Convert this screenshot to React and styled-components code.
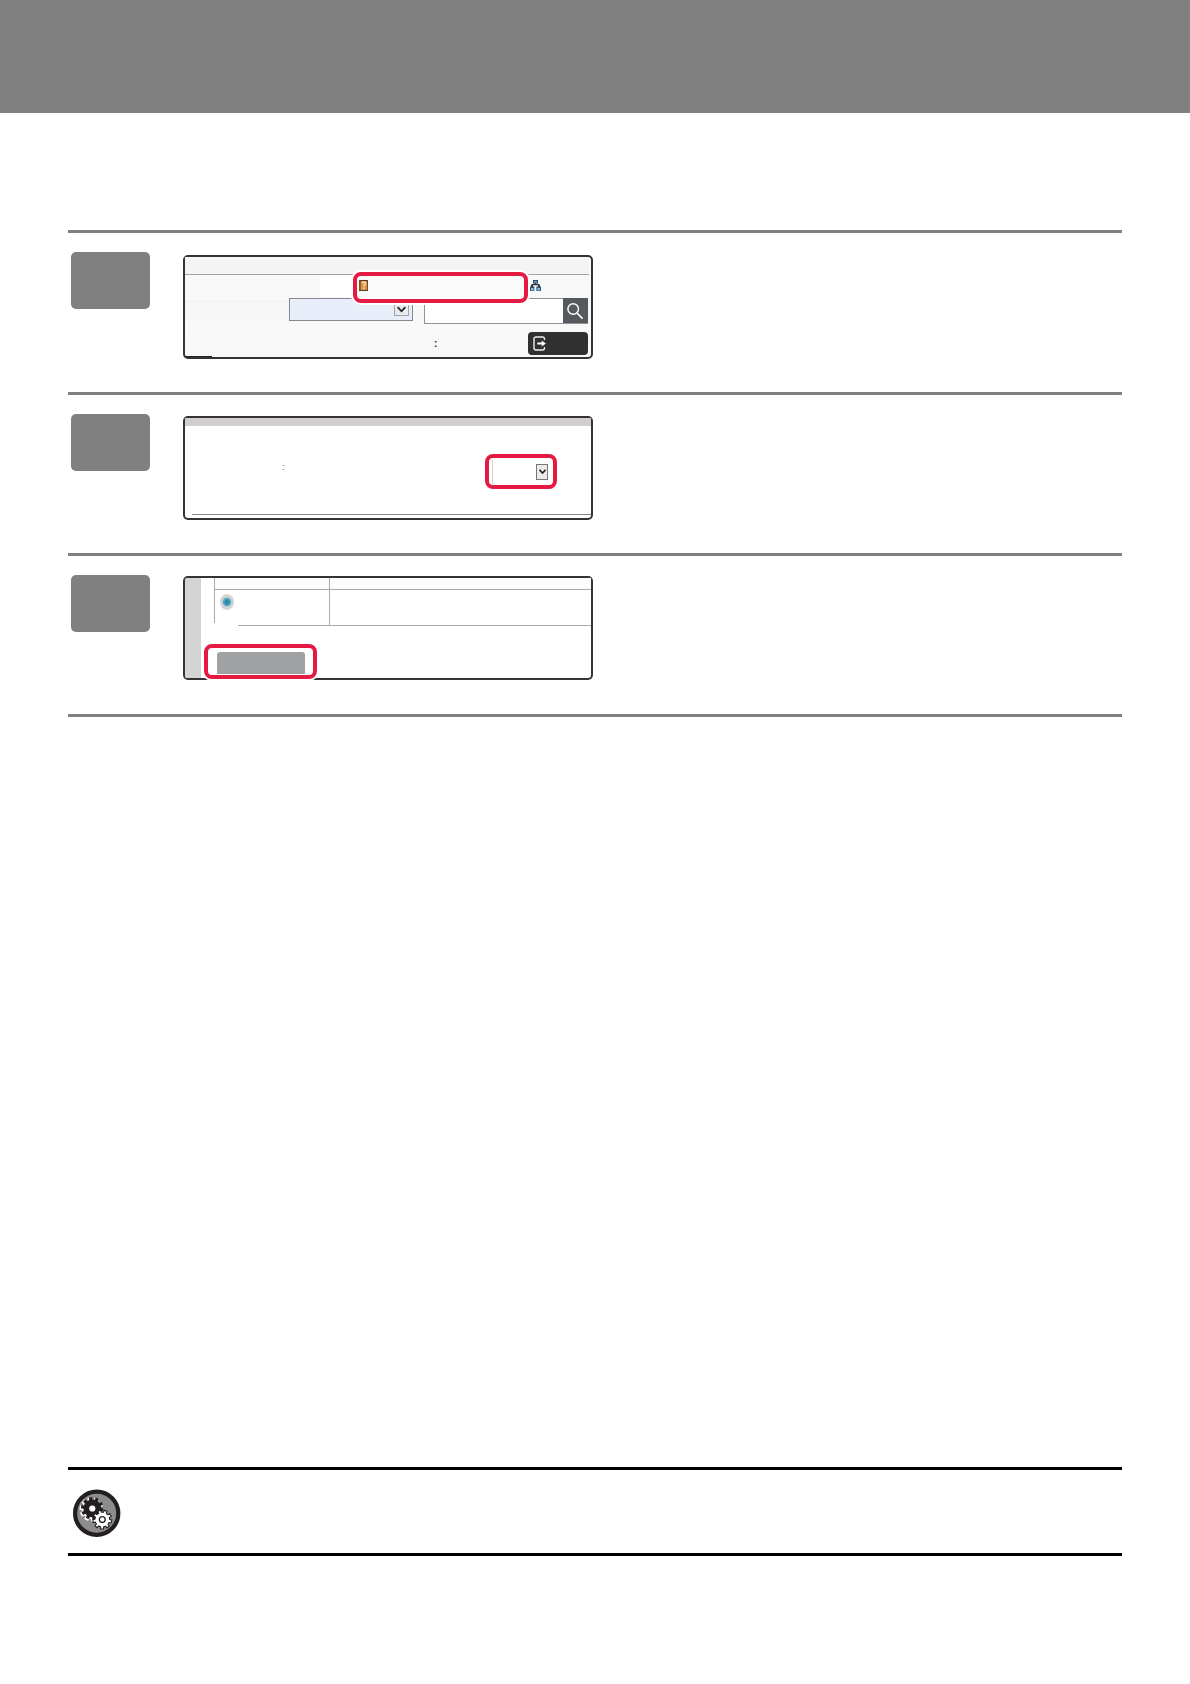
import React from "react";
import styled, { createGlobalStyle } from "styled-components";

const GlobalStyle = createGlobalStyle`
  * { box-sizing: border-box; }
  body { margin: 0; background: #fff; font-family: "Liberation Sans", Arial, sans-serif; }
  svg { display: block; flex: none; }
`;

const Page = styled.main`
  display: flex;
  flex-direction: column;
  width: 1190px;
  height: 1684px;
  overflow: hidden;
  background: #fff;
`;

const Banner = styled.header`
  flex: none;
  height: 113px;
  background: #808080;
`;

const Steps = styled.ol`
  list-style: none;
  margin: 117px 68px 0;
  padding: 0;
  border-bottom: 3px solid #808080;
`;

const Step = styled.li`
  display: flex;
  align-items: flex-start;
  height: ${(p) => p.$height}px;
  border-top: 3px solid #808080;
  padding: 19px 0 0 3px;
`;

const StepBadge = styled.div`
  flex: none;
  width: 79px;
  height: 57px;
  margin-right: 33px;
  border-radius: 5px;
  background: #808080;
`;

const Screen = styled.section`
  position: relative;
  display: flex;
  flex: none;
  flex-direction: ${(p) => (p.$row ? "row" : "column")};
  width: 410px;
  height: 104px;
  margin-top: ${(p) => p.$top}px;
  border: 2px solid #353334;
  border-radius: 5px;
  background: ${(p) => p.$bg || "#fff"};
`;

const Callout = styled.div`
  position: absolute;
  left: ${(p) => p.$x}px;
  top: ${(p) => p.$y}px;
  width: ${(p) => p.$w}px;
  height: ${(p) => p.$h}px;
  border: 4px solid #e51a43;
  border-radius: 8px;
  background: ${(p) => p.$bg || "#fff"};
  box-shadow: 0 0 0 2px #fff;
`;

const TitleBar = styled.div`
  flex: none;
  height: 18px;
  margin-right: 2px;
  background: #f4f4f4;
  border-bottom: 1px solid #a2a2a2;
`;

const LinkRow = styled.div`
  display: flex;
  height: 23px;
  padding-left: 135px;
`;

const LinkGap = styled.div`
  width: 211px;
  height: 22px;
  background: linear-gradient(90deg, #fff 34px, transparent 34px);
`;

const LinkIcon = styled.div`
  padding-top: 5px;
  margin-left: -1px;
`;

const BookSlot = styled.div`
  padding: 4px 0 0 2px;
`;

const FieldRow = styled.div`
  display: flex;
  align-items: flex-start;
  height: 34px;
  padding-left: 104px;
  background: linear-gradient(#fdfdfd 1px, #f6f6f6 1px, #f9f9f9);
`;

const SelectBox = styled.div`
  display: flex;
  justify-content: flex-end;
  width: 124px;
  height: 23px;
  padding: 4px 3px 0 0;
  border: 1px solid #85888f;
  background: #e7eefa;
`;

const SelectArrow = styled.div`
  display: grid;
  place-items: center;
  width: ${(p) => p.$w}px;
  height: ${(p) => p.$h}px;
  border: 1px solid ${(p) => p.$line || "#a0a3aa"};
  background: #e9ebee;
`;

const SearchField = styled.div`
  display: flex;
  justify-content: flex-end;
  width: 164px;
  height: 26px;
  margin-left: 11px;
  border: 1px solid #929292;
  border-right: 0;
  background: #fff;
`;

const SearchButton = styled.div`
  display: grid;
  place-items: center;
  width: 25px;
  height: 25px;
  margin-top: -1px;
  padding-right: 1px;
  background: #565a5e;
`;

const FooterRow = styled.div`
  display: flex;
  justify-content: flex-end;
  flex: 1;
  padding-right: 3px;
`;

const Colon = styled.span`
  width: 4px;
  height: 12px;
  margin-top: ${(p) => p.$top}px;
  margin-right: ${(p) => p.$right || 0}px;
  font-size: ${(p) => p.$size}px;
  font-weight: ${(p) => p.$weight || 400};
  line-height: 12px;
  color: ${(p) => p.$color};
`;

const LogoutButton = styled.div`
  display: flex;
  align-items: center;
  width: 60px;
  height: 23px;
  padding-left: 5px;
  border-radius: 4px;
  background: #303031;
`;

const BottomMark = styled.div`
  width: 27px;
  height: 1px;
  background: #222;
`;

const GreyBar = styled.div`
  height: 8px;
  background: #d0cecf;
`;

const SettingArea = styled.div`
  display: flex;
  flex: 1;
  margin-left: 7px;
  padding: 35px 0 0 90px;
  border-bottom: 1px solid #888;
`;

const BottomSpace = styled.div`
  height: 3px;
`;

const DropCallout = styled(Callout)`
  display: flex;
  justify-content: flex-end;
  padding: 6px 5px 0 0;

  &::before {
    content: "";
    width: 1px;
    height: 24px;
    margin: -4px auto 0 3px;
    background: #d5d0d0;
  }
`;

const Sidebar = styled.div`
  width: 16px;
  background: #d4d4d4;
  border-radius: 2px 0 0 2px;
`;

const TableArea = styled.div`
  display: grid;
  grid-template-columns: 115px 1fr;
  grid-template-rows: 12px 36px;
  flex: 1;
  padding-left: 13px;
`;

const Cell = styled.div`
  background: ${(p) => (p.$head ? "#fcfcfb" : "#fff")};
  border-left: 1px solid #aaa;
  border-bottom: 1px solid #aaa;
`;

const RadioCell = styled.div`
  display: flex;
  flex-direction: column;
  justify-content: space-between;
  padding: 4px 0 0 6px;
  background: linear-gradient(#aaa, #aaa) 0 0 / 1px 33px no-repeat;

  &::after {
    content: "";
    height: 1px;
    margin-left: 18px;
    background: #aaa;
  }
`;

const Radio = styled.div`
  width: 14px;
  height: 16px;
  border-radius: 50%;
  background: radial-gradient(circle, #2b8ba6 0 2px, #50a9c2 3px, #55abc3 3.8px, #cfd4d5 4.7px, #d2d2d2 6.5px, #dedede 8px);
`;

const SubmitButton = styled.div`
  width: 88px;
  height: 22px;
  margin: 4px 0 0 9px;
  border-radius: 3px 3px 0 0;
  background: #9fa1a3;
`;

const Note = styled.footer`
  display: flex;
  align-items: flex-start;
  height: 89px;
  margin: 750px 68px 0;
  padding: 19px 0 0 4px;
  border-top: 3px solid #000;
  border-bottom: 3px solid #000;
`;

function BookIcon() {
  return (
    <svg width="9" height="11" viewBox="0 0 10 11" preserveAspectRatio="none">
      <rect x=".5" y=".5" width="9" height="10" fill="#dd9443" stroke="#56402c" />
      <path d="M1.5 1v9" stroke="#a45f1d" strokeWidth="1.6" />
      <path d="M3.7 3.2c.2-1.4 3.5-1.5 3.2.5C6.8 5 5.2 5 5.2 6.4M5.2 7.6v1.3" fill="none" stroke="#fff0ca" strokeWidth="1.2" />
    </svg>
  );
}

function NetworkIcon() {
  return (
    <svg width="11" height="11" viewBox="0 0 11 11">
      <path d="M3 0h5v3.6H3z" fill="#354453" />
      <path d="M4 .8h3v2H4z" fill="#5e92bd" />
      <path d="M1.5 4h8v1.2h-8zM5 3h1v2H5zM1 5h2v2H1zM8 5h2v2H8z" fill="#29333c" />
      <path d="M0 6.5h4.4V11H0zM6.4 6.5H11V11H6.4z" fill="#33506b" />
      <path d="M1 8h2.6v2.4H1zM7.4 8H10v2.4H7.4z" fill="#8abbe0" />
    </svg>
  );
}

function Chevron({ size = 9, weight = 1.6 }) {
  return (
    <svg width={size} height={size * 0.75} viewBox="0 0 8 6">
      <path d="M.6 1 4 4.7 7.4 1" fill="none" stroke="#222" strokeWidth={weight} />
    </svg>
  );
}

function SearchIcon() {
  return (
    <svg width="18" height="18" viewBox="0 0 18 18">
      <circle cx="7.2" cy="7" r="5.3" fill="none" stroke="#fff" strokeWidth="1.5" />
      <path d="m11 11 5.5 5.7" stroke="#fff" strokeWidth="1.7" />
    </svg>
  );
}

function LogoutIcon() {
  return (
    <svg width="14" height="15" viewBox="0 0 14 15">
      <path d="M11.5 4V3a2 2 0 0 0-2-2H3a2 2 0 0 0-2 2v9a2 2 0 0 0 2 2h6.5a2 2 0 0 0 2-2v-1" fill="none" stroke="#eee" strokeWidth="1.4" />
      <path d="M4.3 7.5H10" stroke="#fff" strokeWidth="2" />
      <path d="m8.7 4.4 4.2 3.1-4.2 3.1z" fill="#fff" />
    </svg>
  );
}

function gearPath(cx, cy, outer, inner, teeth, turn) {
  const step = (Math.PI * 2) / teeth;
  const points = [];
  for (let i = 0; i < teeth; i += 1) {
    const a = i * step + turn;
    [[-0.29, inner], [-0.23, outer], [0.23, outer], [0.29, inner]].forEach(([k, r]) => {
      const t = a + k * step;
      points.push(`${(cx + r * Math.cos(t)).toFixed(2)} ${(cy + r * Math.sin(t)).toFixed(2)}`);
    });
  }
  return `M${points.join("L")}Z`;
}

function GearsIcon() {
  const bigGear = gearPath(20.3, 19.4, 11.4, 8.9, 10, 0.15);
  return (
    <svg width="49" height="49" viewBox="0 0 49 49">
      <circle cx="24.7" cy="24.3" r="21.6" fill="#8c8c8c" stroke="#231f20" strokeWidth="4.2" />
      <path d={bigGear} transform="translate(-.8 .9)" fill="#fff" stroke="#fff" strokeWidth="1.2" />
      <path d={bigGear} fill="#231f20" />
      <circle cx="20.3" cy="19.5" r="3.1" fill="#fff" />
      <path d={gearPath(30.3, 30.6, 9.5, 7.4, 9, 0.2)} fill="#fff" stroke="#231f20" strokeWidth="1.1" />
      <circle cx="30.3" cy="30.6" r="2.9" fill="#fff" stroke="#231f20" strokeWidth="1.3" />
    </svg>
  );
}

function AddressBookScreen() {
  return (
    <Screen $top={3} $bg="#f8f8f8">
      <TitleBar />
      <LinkRow>
        <LinkGap />
        <LinkIcon><NetworkIcon /></LinkIcon>
      </LinkRow>
      <FieldRow>
        <SelectBox>
          <SelectArrow $w={15} $h={13}><Chevron /></SelectArrow>
        </SelectBox>
        <SearchField>
          <SearchButton><SearchIcon /></SearchButton>
        </SearchField>
      </FieldRow>
      <FooterRow>
        <Colon $size={10} $weight={700} $top={6} $right={90} $color="#222">:</Colon>
        <LogoutButton><LogoutIcon /></LogoutButton>
      </FooterRow>
      <BottomMark />
      <Callout $x={168} $y={15} $w={175} $h={31} $bg="#fafafa">
        <BookSlot><BookIcon /></BookSlot>
      </Callout>
    </Screen>
  );
}

function ItemCountScreen() {
  return (
    <Screen $top={2}>
      <GreyBar />
      <SettingArea>
        <Colon $size={9} $top={0} $color="#555">:</Colon>
      </SettingArea>
      <BottomSpace />
      <DropCallout $x={300} $y={36} $w={72} $h={35}>
        <SelectArrow $w={12} $h={16} $line="#777"><Chevron size={7} weight={1.8} /></SelectArrow>
      </DropCallout>
    </Screen>
  );
}

function SubmitScreen() {
  return (
    <Screen $top={1} $row>
      <Sidebar />
      <TableArea>
        <Cell $head />
        <Cell $head />
        <RadioCell><Radio /></RadioCell>
        <Cell />
      </TableArea>
      <Callout $x={19} $y={66} $w={113} $h={35}>
        <SubmitButton />
      </Callout>
    </Screen>
  );
}

export default function App() {
  return (
    <Page>
      <GlobalStyle />
      <Banner />
      <Steps>
        <Step $height={162}>
          <StepBadge />
          <AddressBookScreen />
        </Step>
        <Step $height={161}>
          <StepBadge />
          <ItemCountScreen />
        </Step>
        <Step $height={161}>
          <StepBadge />
          <SubmitScreen />
        </Step>
      </Steps>
      <Note>
        <GearsIcon />
      </Note>
    </Page>
  );
}
